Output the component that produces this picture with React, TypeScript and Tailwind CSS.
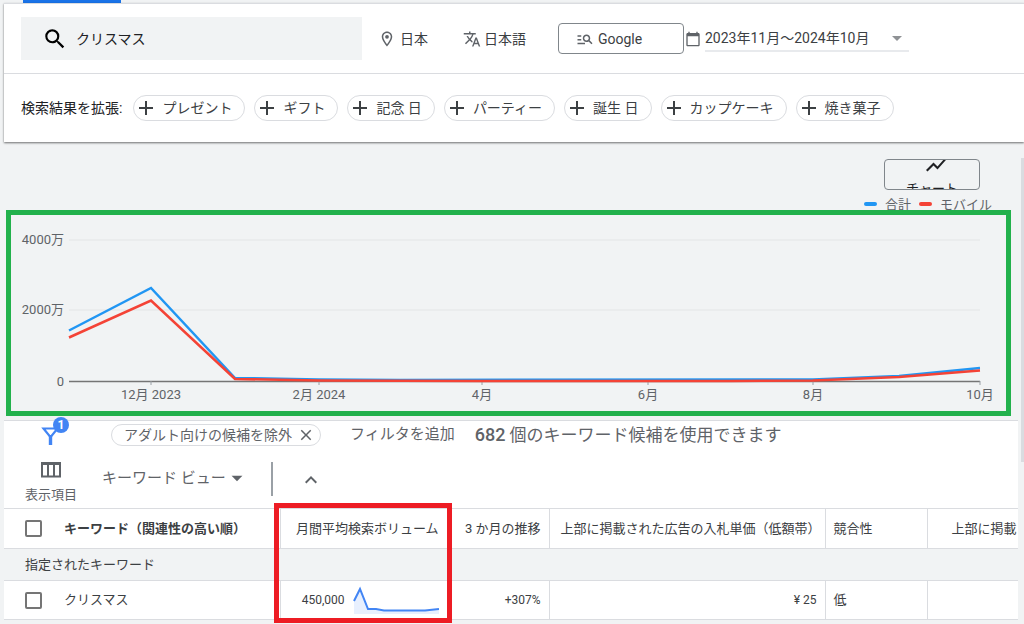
import {
  MdAdd,
  MdArrowDropDown,
  MdCalendarToday,
  MdClose,
  MdExpandLess,
  MdManageSearch,
  MdOutlineLocationOn,
  MdSearch,
  MdShowChart,
  MdTranslate
} from 'react-icons/md';

const suggestions = [
  'プレゼント',
  'ギフト',
  '記念 日',
  'パーティー',
  '誕生 日',
  'カップケーキ',
  '焼き菓子'
] as const;

const gridLines = [
  { label: '4000万', y: 25 },
  { label: '2000万', y: 95 }
] as const;

const months = [
  { label: '12月 2023', x: 140 },
  { label: '2月 2024', x: 308 },
  { label: '4月', x: 471 },
  { label: '6月', x: 637 },
  { label: '8月', x: 802 },
  { label: '10月', x: 969 }
] as const;

const totalLine = '58,115.5 140,73 224,163 308,164.5 389,165 802,164.5 888,161 969,153';
const mobileLine = '58,122.5 140,85.5 224,164 308,165.5 389,165.8 471,166 720,166 802,165.5 888,162 969,155.5';

const SearchHeader = () => {
  return (
    <header className="relative z-10 ml-1 border-t border-[#dadce0] bg-white shadow-[0_1px_2px_rgba(0,0,0,0.55)]">
      <div className="flex h-[70px] items-center border-b border-[#dadce0] pl-[17px] text-sm text-[#3c4043]">
        <label className="flex h-[43px] w-[341px] items-center gap-2 bg-[#f1f3f4] pl-[21px] text-[#202124]">
          <MdSearch size={26} className="shrink-0 text-black" />
          <input
            aria-label="キーワード"
            defaultValue="クリスマス"
            className="min-w-0 flex-1 bg-transparent outline-none"
          />
        </label>
        <button className="ml-4 flex items-center gap-1">
          <MdOutlineLocationOn size={18} className="text-[#5f6368]" />
          日本
        </button>
        <button className="ml-[35px] flex items-center gap-[3px]">
          <MdTranslate size={18} className="text-[#5f6368]" />
          日本語
        </button>
        <button className="ml-8 flex h-[31px] w-[126px] items-center gap-1 rounded border border-[#80868b] pl-[17px]">
          <MdManageSearch size={18} className="text-[#5f6368]" />
          Google
        </button>
        <MdCalendarToday size={16} className="ml-px shrink-0 text-[#5f6368]" />
        <div className="relative ml-1 w-[204px] border-b-2 border-[#e8eaed]">
          <select aria-label="期間" className="h-6 w-full appearance-none bg-transparent outline-none">
            <option>2023年11月～2024年10月</option>
          </select>
          <MdArrowDropDown size={24} className="pointer-events-none absolute top-0 right-0 text-[#8f9295]" />
        </div>
      </div>

      <div className="flex h-[68px] items-center gap-[9px] pl-[17px] text-sm whitespace-nowrap text-[#3c4043]">
        <span className="mr-[2px] text-[#202124]">検索結果を拡張:</span>
        {suggestions.map((word) => (
          <button
            key={word}
            className="flex h-[26px] items-center gap-1 rounded-full border border-[#dadce0] pr-3"
          >
            <MdAdd size={24} />
            {word}
          </button>
        ))}
      </div>
    </header>
  );
};

const TrendChart = () => {
  return (
    <section className="pt-[17px]">
      <div className="flex justify-end pr-11">
        <button className="flex h-[31px] w-24 flex-col items-center gap-[2px] overflow-hidden rounded border border-[#80868b] text-[13px] leading-5 text-[#202124]">
          <MdShowChart size={24} className="-mt-[7px] ml-2 shrink-0" />
          チャート
        </button>
      </div>
      <div className="flex h-5 justify-end gap-2 overflow-hidden pr-8 text-[13px] leading-[30px] text-[#5f6368]">
        <span className="flex gap-2">
          <i className="mt-3 h-1 w-[13px] rounded-sm bg-[#2196f3]" />
          合計
        </span>
        <span className="flex gap-2">
          <i className="mt-3 h-1 w-[13px] rounded-sm bg-[#f44336]" />
          モバイル
        </span>
      </div>

      <div className="mr-[13px] ml-[6px] border-[5px] border-[#22b14c]">
        <svg viewBox="0 0 995 196" className="block w-full" fontSize="13" fill="#5f6368">
          {gridLines.map((line) => (
            <g key={line.label}>
              <path d={`M58 ${line.y}H969`} stroke="#e3e5e6" />
              <text x="53" y={line.y + 4} textAnchor="end">
                {line.label}
              </text>
            </g>
          ))}
          <text x="53" y="171" textAnchor="end">
            0
          </text>
          <path d="M58 166.5H969" stroke="#757575" strokeWidth="1.5" />
          {months.map((month) => (
            <g key={month.label}>
              <path d={`M${month.x} 166v4`} stroke="#9aa0a6" />
              <text x={month.x} y="184" textAnchor="middle">
                {month.label}
              </text>
            </g>
          ))}
          <polyline points={totalLine} fill="none" stroke="#2196f3" strokeWidth="2.5" />
          <polyline points={mobileLine} fill="none" stroke="#f44336" strokeWidth="2.5" />
        </svg>
      </div>
    </section>
  );
};

const FilterBar = () => {
  return (
    <div className="border-t border-[#dadce0] text-[#5f6368]">
      <div className="flex h-[27px] items-center pl-[37px]">
        <button aria-label="フィルタ" className="relative">
          <svg viewBox="0 0 20 20" width="20" height="20" fill="none" stroke="#4285f4" strokeWidth="2.2">
            <path d="M2.500 3.500h14L10.500 11h-2z" />
            <path d="M9.500 10v10" strokeWidth="3.4" />
          </svg>
          <span className="absolute -top-2 left-3 size-4 rounded-full bg-[#4285f4] text-center text-xs leading-4 font-bold text-white">
            1
          </span>
        </button>
        <div className="ml-[50px] flex h-[22px] w-[210px] items-center justify-between rounded-full border border-[#dadce0] pr-[5px] pl-3 text-sm whitespace-nowrap">
          アダルト向けの候補を除外
          <button aria-label="削除">
            <MdClose size={18} />
          </button>
        </div>
        <button className="ml-[29px] text-[15px]">フィルタを追加</button>
        <p className="ml-5 text-[17px] whitespace-nowrap">
          <span className="text-lg font-medium">682</span> 個のキーワード候補を使用できます
        </p>
      </div>

      <div className="flex h-[60px] pt-[10px] pl-[21px]">
        <button className="flex w-[52px] flex-col items-center gap-[7px] pt-1 text-[13px] leading-5">
          <svg viewBox="0 0 20 16" width="20" height="16" fill="none" stroke="currentColor" strokeWidth="2">
            <path d="M1 1.500h18v13H1zM7 2v12M13 2v12" />
            <path d="M0 1.500h20" strokeWidth="3" />
          </svg>
          <span className="whitespace-nowrap">表示項目</span>
        </button>
        <div className="relative ml-[25px] h-10 w-[148px]">
          <select
            aria-label="ビュー"
            className="h-full w-full appearance-none bg-transparent text-[15px] outline-none"
          >
            <option>キーワード ビュー</option>
          </select>
          <MdArrowDropDown size={26} className="pointer-events-none absolute top-[7px] right-0" />
        </div>
        <div className="mt-1 ml-[21px] h-[34px] w-[2px] bg-[#9aa0a6]" />
        <button aria-label="折りたたむ" className="ml-[26px] flex h-11 items-center">
          <MdExpandLess size={24} />
        </button>
      </div>
    </div>
  );
};

const Sparkline = () => {
  return (
    <svg viewBox="0 0 86 28" width="86" height="28" fill="none">
      <path d="M1 15L7 3l8 20h8l8 2h41l14-2v5H1z" fill="#e8f0fe" />
      <path d="M1 15L7 3l8 20h8l8 1.500h41l14-1.500" stroke="#4285f4" strokeWidth="2" />
    </svg>
  );
};

const KeywordTable = () => {
  return (
    <div className="relative">
      <table className="w-full table-fixed border-b border-[#dadce0] text-left text-[13px] whitespace-nowrap text-[#3c4043]">
        <colgroup>
          <col className="w-[276px]" />
          <col className="w-[167px]" />
          <col className="w-[102px]" />
          <col className="w-[276px]" />
          <col className="w-[102px]" />
          <col />
        </colgroup>
        <thead>
          <tr className="h-10 border-t border-b border-[#dadce0]">
            <th className="border-r border-[#dadce0] pl-[21px] font-bold">
              <label className="flex items-center gap-[22px]">
                <input
                  type="checkbox"
                  className="size-[17px] appearance-none rounded-xs border-2 border-[#757575]"
                />
                キーワード（関連性の高い順）
              </label>
            </th>
            <th className="border-r border-[#dadce0] pr-2 text-right font-normal">月間平均検索ボリューム</th>
            <th className="border-r border-[#dadce0] pr-2 text-right font-normal">3 か月の推移</th>
            <th className="border-r border-[#dadce0] pr-1 text-right font-normal">
              上部に掲載された広告の入札単価（低額帯）
            </th>
            <th className="border-r border-[#dadce0] pl-2 font-normal">競合性</th>
            <th className="overflow-hidden pl-6 font-normal">上部に掲載された広告の入札単価（高額帯）</th>
          </tr>
        </thead>
        <tbody>
          <tr className="h-8 border-b border-[#dadce0] bg-[#f1f3f4]">
            <td colSpan={6} className="pl-[21px]">
              指定されたキーワード
            </td>
          </tr>
          <tr className="h-[39px]">
            <td className="border-r border-[#dadce0] pl-[21px]">
              <label className="flex items-center gap-[22px]">
                <input
                  type="checkbox"
                  className="size-[17px] appearance-none rounded-xs border-2 border-[#757575]"
                />
                クリスマス
              </label>
            </td>
            <td className="border-r border-[#dadce0] pr-2 text-xs">
              <div className="flex items-center justify-end gap-2">
                450,000
                <Sparkline />
              </div>
            </td>
            <td className="border-r border-[#dadce0] pr-2 text-right text-xs">+307%</td>
            <td className="border-r border-[#dadce0] pr-2 text-right text-xs">¥ 25</td>
            <td className="border-r border-[#dadce0] pl-2">低</td>
            <td />
          </tr>
        </tbody>
      </table>
      {/* highlight over the search volume column */}
      <div className="pointer-events-none absolute -top-[5px] -bottom-[3px] left-[270px] w-[178px] border-[5px] border-[#ed1c24]" />
    </div>
  );
};

const App = () => {
  return (
    <div className="min-h-screen overflow-hidden bg-[#f1f3f4] font-['Roboto','Noto_Sans_CJK_JP',sans-serif]">
      <div className="ml-[23px] h-[3px] w-[98px] bg-[#1a73e8]" />
      <SearchHeader />
      <main className="relative">
        <TrendChart />
        <div className="mt-1 mr-[6px] ml-1 bg-white">
          <FilterBar />
          <KeywordTable />
        </div>
        <div className="absolute top-4 right-0 h-[304px] w-[3px] bg-[#dadce0]" />
      </main>
    </div>
  );
};

export default App;
